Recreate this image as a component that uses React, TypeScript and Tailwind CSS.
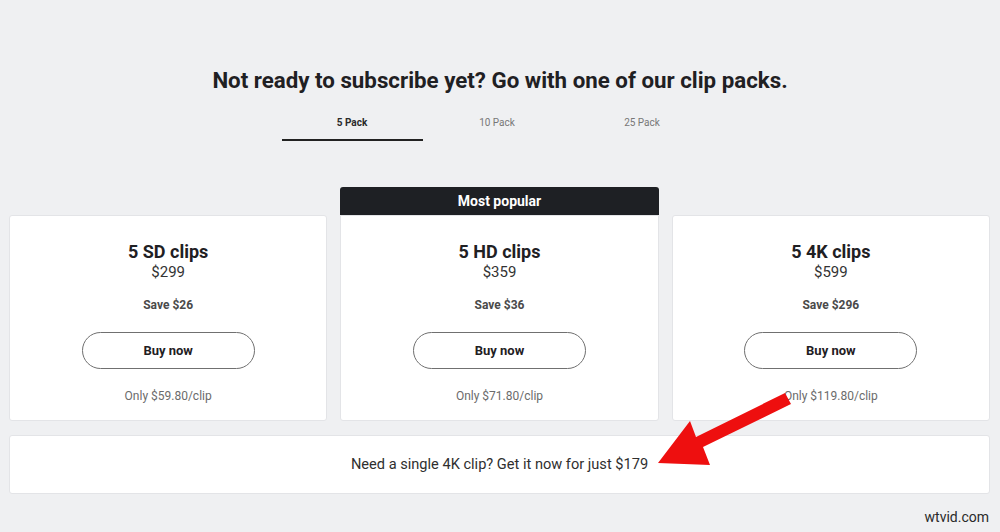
const plans = [
  { title: '5 SD clips', price: '$299', save: 'Save $26', per: 'Only $59.80/clip' },
  { title: '5 HD clips', price: '$359', save: 'Save $36', per: 'Only $71.80/clip', popular: true },
  { title: '5 4K clips', price: '$599', save: 'Save $296', per: 'Only $119.80/clip' },
];

const tabs = ['5 Pack', '10 Pack', '25 Pack'];

function PlanCard({ plan }: { plan: (typeof plans)[number] }) {
  return (
    <div className="flex flex-col">
      {plan.popular ? (
        <div className="h-[28px] rounded-t-[3px] bg-[#1e2024] flex items-center justify-center text-[14px] font-bold text-white">
          Most popular
        </div>
      ) : (
        <div className="h-[28px]" />
      )}
      <div
        className={`h-[206px] bg-white border border-[#e3e4e7] flex flex-col items-center pt-[25px] ${
          plan.popular ? 'rounded-b-[3px]' : 'rounded-[3px]'
        }`}
      >
        <div className="text-[18px] leading-[22px] font-bold text-[#1f2023]">{plan.title}</div>
        <div className="text-[15px] leading-[18px] text-[#333]">{plan.price}</div>
        <div className="mt-[16px] text-[12px] leading-[16px] font-bold text-[#4a4a4a]">{plan.save}</div>
        <button className="mt-[19px] w-[173px] h-[37px] rounded-full border border-[#707070] bg-white text-[13px] font-bold text-[#1f2023]">
          Buy now
        </button>
        <div className="mt-[19px] text-[12px] leading-[16px] text-[#6b6b6b]">{plan.per}</div>
      </div>
    </div>
  );
}

export default function App() {
  return (
    <div
      className="relative w-[1000px] h-[532px] overflow-hidden bg-[#eff0f2] flex flex-col items-center"
      style={{ fontFamily: 'Roboto, "Liberation Sans", sans-serif' }}
    >
      <h1 className="mt-[66px] text-[22.3px] leading-[28px] font-bold text-[#1f2023]">
        Not ready to subscribe yet? Go with one of our clip packs.
      </h1>

      <div className="mt-[21px] flex gap-[4px] pr-[6px]">
        {tabs.map((t, i) => (
          <div
            key={t}
            className={`w-[141px] pb-[8px] text-center text-[10px] leading-[16px] border-b-[2px] ${
              i === 0 ? 'font-bold text-[#2a2a2a] border-[#222]' : 'text-[#777] border-transparent'
            }`}
          >
            {t}
          </div>
        ))}
      </div>

      <div className="mt-[46px] w-full pl-[9px] pr-[10px] grid grid-cols-3 gap-[13px]">
        {plans.map((p) => (
          <PlanCard key={p.title} plan={p} />
        ))}
      </div>

      <div className="mt-[14px] self-start ml-[9px] w-[981px] h-[59px] rounded-[3px] bg-white border border-[#e3e4e7] flex items-center justify-center text-[14.6px] text-[#2f2f2f]">
        Need a single 4K clip? Get it now for just $179
      </div>

      <div className="absolute right-[11px] bottom-[4px] text-[14px] text-[#2a2a2a]">wtvid.com</div>

      <svg className="absolute left-0 top-0" width="1000" height="532" viewBox="0 0 1000 532">
        <polygon
          points="658,463 690,421 696,437 785,393 791,404 703,447 710,465"
          fill="#ee0f0f"
        />
      </svg>
    </div>
  );
}
